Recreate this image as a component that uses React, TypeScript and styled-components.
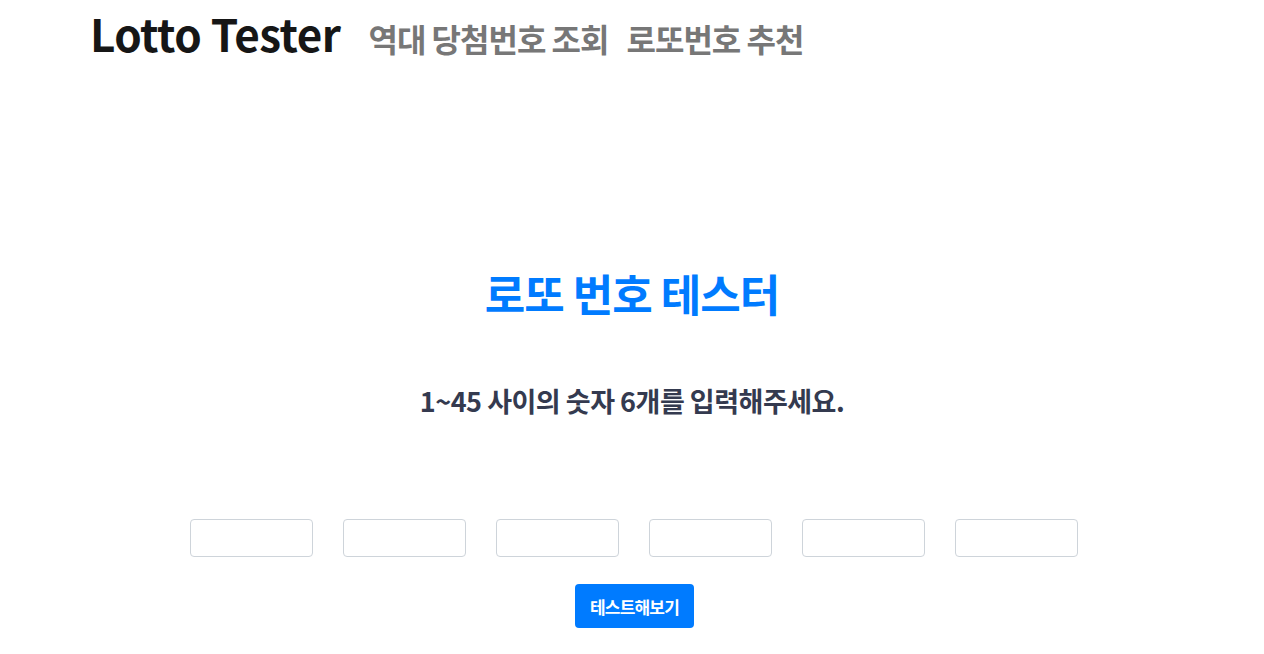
import React from 'react'
import styled, { createGlobalStyle } from 'styled-components'

const GlobalStyle = createGlobalStyle`
  html, body {
    margin: 0;
    padding: 0;
    background: #fff;
  }
  body {
    font-family: 'Noto Sans CJK KR', 'Noto Sans', sans-serif;
  }
`

const Header = styled.nav`
  height: 66px;
  padding-left: 90px;
  box-sizing: border-box;
  display: flex;
  align-items: baseline;
`

const Brand = styled.div`
  font-size: 44px;
  font-weight: 700;
  color: #161616;
  letter-spacing: -0.5px;
  line-height: 66px;
  margin-right: 28px;
`

const NavLink = styled.a`
  font-size: 32px;
  font-weight: 700;
  color: #777;
  letter-spacing: -1px;
  margin-right: 18px;
  text-decoration: none;
`

const Main = styled.main`
  display: flex;
  flex-direction: column;
  align-items: center;
  padding-top: 199px;
`

const Title = styled.h1`
  margin: 0;
  font-size: 44px;
  font-weight: 700;
  color: #007bff;
  letter-spacing: -1px;
  line-height: 56px;
`

const Subtitle = styled.h3`
  margin: 62px 0 0;
  font-size: 27px;
  font-weight: 700;
  color: #343a4f;
  letter-spacing: -0.5px;
  line-height: 36px;
`

const InputRow = styled.div`
  margin: 100px 0 0 4px;
  display: flex;
  gap: 30px;
`

const NumberInput = styled.input`
  width: 123px;
  height: 38px;
  box-sizing: border-box;
  border: 1px solid #ced4da;
  border-radius: 4px;
  padding: 6px 12px;
  font-size: 16px;
  outline: none;
`

const TestButton = styled.button`
  margin: 27px 0 0 5px;
  width: 119px;
  height: 44px;
  border: none;
  border-radius: 4px;
  background: #007bff;
  color: #fff;
  font-family: inherit;
  font-size: 17px;
  font-weight: 700;
  letter-spacing: -0.8px;
  cursor: pointer;
`

export default function App(): JSX.Element {
  return (
    <>
      <GlobalStyle />
      <Header>
        <Brand>Lotto Tester</Brand>
        <NavLink href="#">역대 당첨번호 조회</NavLink>
        <NavLink href="#">로또번호 추천</NavLink>
      </Header>
      <Main>
        <Title>로또 번호 테스터</Title>
        <Subtitle>1~45 사이의 숫자 6개를 입력해주세요.</Subtitle>
        <InputRow>
          {[0, 1, 2, 3, 4, 5].map((i) => (
            <NumberInput key={i} type="text" />
          ))}
        </InputRow>
        <TestButton>테스트해보기</TestButton>
      </Main>
    </>
  )
}
